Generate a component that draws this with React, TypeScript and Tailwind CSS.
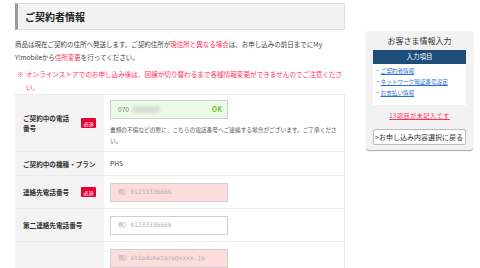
import React from "react";

const jp = { fontFamily: '"Noto Sans CJK JP", "Noto Sans", sans-serif' };
const mono = { fontFamily: '"DejaVu Sans Mono", "Noto Sans CJK JP", monospace' };

function Badge() {
  return (
    <span className="inline-flex items-center justify-center w-[15px] h-[10px] bg-[#e60033] text-white text-[5px] leading-none rounded-[1px]">
      必須
    </span>
  );
}

function Row({
  label,
  required,
  children,
  h,
}: {
  label: React.ReactNode;
  required?: boolean;
  children: React.ReactNode;
  h: string;
}) {
  return (
    <div className={`flex border-b border-[#ececec] ${h}`}>
      <div className="w-[89px] shrink-0 bg-[#f3f3f3] flex items-center justify-between pl-[8px] pr-[8px]">
        <div className="text-[6.6px] leading-[10px] font-bold text-[#333]">{label}</div>
        {required && <Badge />}
      </div>
      <div className="flex-1 pl-[6px] flex flex-col justify-center">{children}</div>
    </div>
  );
}

function Input({ bg, placeholder }: { bg: string; placeholder: string }) {
  return (
    <div
      className={`w-[118px] h-[19px] border-[1.5px] border-[#cfcfcf] ${bg} flex items-center pl-[7px] text-[6.2px] text-[#b0b0b0]`}
    >
      <span style={mono}>{placeholder}</span>
    </div>
  );
}

export default function App() {
  return (
    <div className="w-[480px] h-[268px] overflow-hidden bg-white relative" style={jp}>
      <div className="flex pl-[15px] pt-[3px]">
        {/* main column */}
        <div className="w-[330px] shrink-0">
          <div className="h-[27px] bg-[#f2f2f2] border border-[#dedede] border-l-[3px] border-l-[#9a9a9a] flex items-center pl-[7px]">
            <span className="text-[10px] font-bold text-[#222]">ご契約者情報</span>
          </div>
          <p className="mt-[8px] text-[6.5px] leading-[13px] text-[#444] whitespace-nowrap">
            商品は現在ご契約の住所へ発送します。ご契約住所が
            <span className="text-[#ff2d55]">現住所と異なる場合</span>
            は、お申し込みの前日までにMy
            <br />
            Y!mobileから<span className="text-[#ff2d55]">住所変更</span>を行ってください。
          </p>
          <div className="mt-[4px] text-[6.6px] leading-[13px] text-[#ff3366] flex whitespace-nowrap">
            <span className="w-[11px] pl-[2px] shrink-0">※</span>
            <span>
              オンラインストアでのお申し込み後は、回線が切り替わるまで各種情報変更ができませんのでご注意くださ
              <br />
              い。
            </span>
          </div>
          <div className="border-t border-r border-[#ececec]">
            <Row
              h="h-[57px]"
              required
              label={
                <>
                  ご契約中の電話
                  <br />
                  番号
                </>
              }
            >
              <div className="w-[118px] h-[19px] border-[1.5px] border-[#cfcfcf] bg-[#eafae6] flex items-center pl-[7px] pr-[5px] text-[6.6px]">
                <span className="text-[#777]">070</span>
                <span className="ml-[3px] w-[28px] h-[7px] bg-[#d6dcd6] blur-[1.5px] rounded-sm" />
                <span className="ml-auto text-[#7bbf2a] text-[7px] font-semibold">OK</span>
              </div>
              <div className="mt-[5px] text-[5.7px] leading-[11px] text-[#555] whitespace-nowrap">
                書類の不備などの際に、こちらの電話番号へご連絡する場合がございます。ご了承くださ
                <br />
                い。
              </div>
            </Row>
            <Row h="h-[24px]" label="ご契約中の機種・プラン">
              <span className="text-[6.6px] text-[#333]">PHS</span>
            </Row>
            <Row h="h-[33px]" required label="連絡先電話番号">
              <Input bg="bg-[#fddcdc]" placeholder="例）01233336666" />
            </Row>
            <Row h="h-[33px]" label="第二連絡先電話番号">
              <Input bg="bg-white" placeholder="例）01233336666" />
            </Row>
            <Row h="h-[33px]" label="">
              <Input bg="bg-[#fddcdc]" placeholder="例）shiodometaro@xxxx.jp" />
            </Row>
          </div>
        </div>

        {/* sidebar */}
        <div className="ml-[21px] mt-[28px] w-[107px] h-[119px] bg-[#f2f2f2] rounded-[3px] shadow-[0_1px_1px_rgba(0,0,0,0.35)] px-[7px] pt-[4px]">
          <div className="text-center text-[8px] leading-[12px] text-[#333]">お客さま情報入力</div>
          <div className="mt-[3px] h-[14px] bg-[#1e4d79] flex items-center justify-center text-white text-[6.5px]">
            入力項目
          </div>
          <div className="bg-white h-[41px] pl-[2px] pt-[2px] text-[5.6px] leading-[11px]">
            <div className="text-[#555]">
              ・<span className="text-[#2a6fd6] underline">ご契約者情報</span>
            </div>
            <div className="text-[#555]">
              ・<span className="text-[#2a6fd6] underline">ネットワーク暗証番号設定</span>
            </div>
            <div className="text-[#555]">
              ・<span className="text-[#2a6fd6] underline">お支払い情報</span>
            </div>
          </div>
          <div className="mt-[6px] text-center text-[6px] leading-[10px] text-[#ff3355] underline tracking-[0.6px]">
            13項目が未記入です
          </div>
          <div className="mt-[8px] h-[16px] bg-white border border-[#bbb] rounded-[2px] flex items-center pl-[1px] text-[7px] text-[#333] whitespace-nowrap">
            &gt;お申し込み内容選択に戻る
          </div>
        </div>
      </div>
    </div>
  );
}
